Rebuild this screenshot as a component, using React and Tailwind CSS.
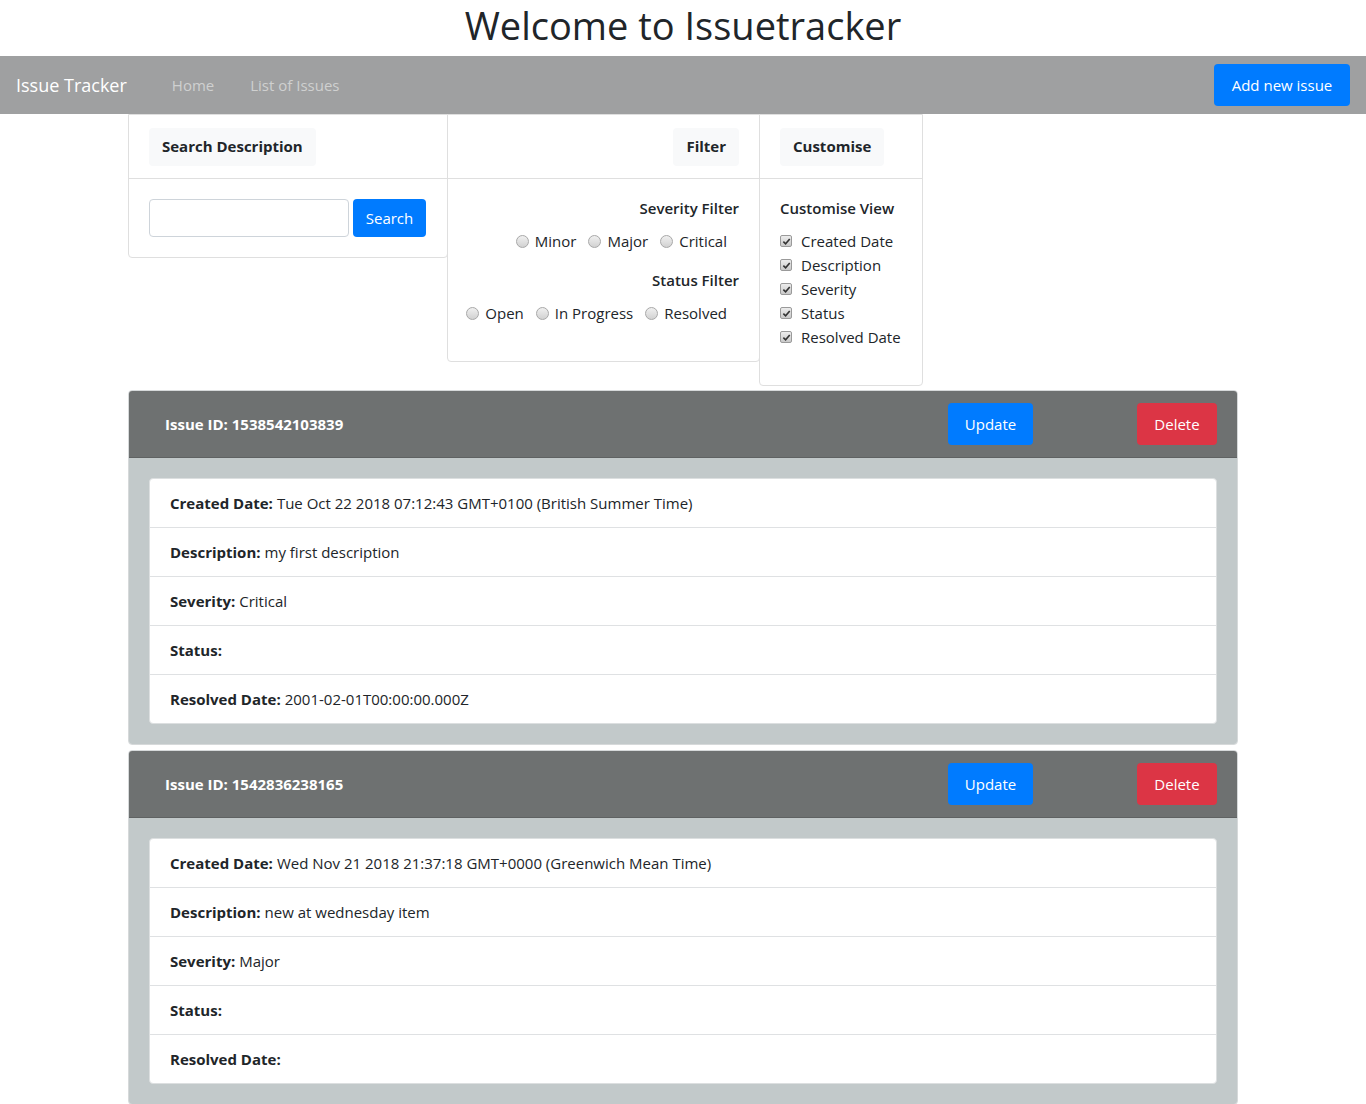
import React from 'react';

const font = { fontFamily: '"Open Sans", "Liberation Sans", sans-serif' };

const Radio = ({ label }) => (
  <label className="inline-flex items-center mr-3 whitespace-nowrap">
    <span className="w-[13px] h-[13px] rounded-full border border-[#a8a8a8] bg-gradient-to-b from-[#f0f0f0] to-[#d2d2d2] mr-[6px]" />
    <span>{label}</span>
  </label>
);

const Check = ({ label }) => (
  <label className="flex items-center h-6 whitespace-nowrap">
    <span className="w-[12px] h-[12px] rounded-[2px] border border-[#9a9a9a] bg-gradient-to-b from-[#ececec] to-[#c9c9c9] mr-[9px] flex items-center justify-center">
      <svg width="9" height="9" viewBox="0 0 10 10">
        <path d="M1.5 5.2 L4 7.6 L8.6 2.2" fill="none" stroke="#333" strokeWidth="1.8" />
      </svg>
    </span>
    <span>{label}</span>
  </label>
);

const HeaderTab = ({ children }) => (
  <span className="inline-block bg-[#f8f9fa] rounded px-[13px] h-[38px] leading-[36px] font-bold whitespace-nowrap">{children}</span>
);

const issues = [
  {
    id: '1538542103839',
    created: 'Tue Oct 22 2018 07:12:43 GMT+0100 (British Summer Time)',
    description: 'my first description',
    severity: 'Critical',
    status: '',
    resolved: '2001-02-01T00:00:00.000Z',
  },
  {
    id: '1542836238165',
    created: 'Wed Nov 21 2018 21:37:18 GMT+0000 (Greenwich Mean Time)',
    description: 'new at wednesday item',
    severity: 'Major',
    status: '',
    resolved: '',
  },
];

const IssueCard = ({ issue }) => {
  const rows = [
    ['Created Date:', issue.created],
    ['Description:', issue.description],
    ['Severity:', issue.severity],
    ['Status:', issue.status],
    ['Resolved Date:', issue.resolved],
  ];
  return (
    <div className="border border-[#d6d9da] rounded mb-[5px] overflow-hidden">
      <div className="bg-[#6e7171] h-[67px] flex items-center pl-[36px] pr-5 border-b border-[#5f6262]">
        <div className="flex-1 text-white font-bold">Issue ID: {issue.id}</div>
        <button className="bg-[#007bff] text-white rounded h-[42px] w-[85px]">Update</button>
        <button className="bg-[#dc3545] text-white rounded h-[42px] w-[80px] ml-[104px]">Delete</button>
      </div>
      <div className="bg-[#c2c9ca] p-5">
        <div className="bg-white border border-[#dcdfe0] rounded">
          {rows.map(([k, v], i) => (
            <div key={k} className={`flex items-center px-5 ${i < rows.length - 1 ? 'border-b border-[#dfe1e3] h-[49px]' : 'h-[48px]'}`}>
              <span className="font-bold mr-1">{k}</span>
              <span>{v}</span>
            </div>
          ))}
        </div>
      </div>
    </div>
  );
};

export default function App() {
  return (
    <div className="bg-white text-[#212529] text-[15px] min-h-screen" style={font}>
      <h1 className="text-center text-[38px] font-medium h-14 leading-[50px]">Welcome to Issuetracker</h1>

      <nav className="bg-[#9fa0a1] h-[58px] flex items-center px-4">
        <span className="text-white text-[18px] mr-[45px]">Issue Tracker</span>
        <a className="text-[#cfd0d0] mr-9">Home</a>
        <a className="text-[#cfd0d0]">List of Issues</a>
        <button className="ml-auto bg-[#007bff] text-white rounded h-[42px] px-4 w-[136px]">Add new issue</button>
      </nav>

      <div className="w-[1110px] mx-auto">
        <div className="flex items-start">
          {/* Search */}
          <div className="w-[320px] border border-[#dfdfdf] rounded-b">
            <div className="h-[64px] px-5 flex items-center border-b border-[#dfdfdf]">
              <HeaderTab>Search Description</HeaderTab>
            </div>
            <div className="p-5 flex items-center">
              <input className="w-[200px] h-[38px] border border-[#ced4da] rounded mr-1" />
              <button className="bg-[#007bff] text-white rounded h-[38px] w-[73px]">Search</button>
            </div>
          </div>

          {/* Filter */}
          <div className="w-[313px] border border-[#dfdfdf] rounded-b -ml-px">
            <div className="h-[64px] px-5 flex items-center justify-end border-b border-[#dfdfdf]">
              <HeaderTab>Filter</HeaderTab>
            </div>
            <div className="px-5 pt-[17px] pb-9 text-right">
              <div className="font-semibold leading-6">Severity Filter</div>
              <div className="flex justify-end h-6 mt-[9px]">
                <Radio label="Minor" />
                <Radio label="Major" />
                <Radio label="Critical" />
              </div>
              <div className="font-semibold leading-6 mt-[15px]">Status Filter</div>
              <div className="flex justify-end h-6 mt-[9px]">
                <Radio label="Open" />
                <Radio label="In Progress" />
                <Radio label="Resolved" />
              </div>
            </div>
          </div>

          {/* Customise */}
          <div className="w-[164px] border border-[#dfdfdf] rounded-b -ml-px">
            <div className="h-[64px] px-5 flex items-center border-b border-[#dfdfdf]">
              <HeaderTab>Customise</HeaderTab>
            </div>
            <div className="px-5 pt-[17px] pb-9">
              <div className="font-semibold leading-6 mb-[9px]">Customise View</div>
              <Check label="Created Date" />
              <Check label="Description" />
              <Check label="Severity" />
              <Check label="Status" />
              <Check label="Resolved Date" />
            </div>
          </div>
        </div>

        <div className="mt-[4px]">
          {issues.map((issue) => (
            <IssueCard key={issue.id} issue={issue} />
          ))}
        </div>
      </div>
    </div>
  );
}
